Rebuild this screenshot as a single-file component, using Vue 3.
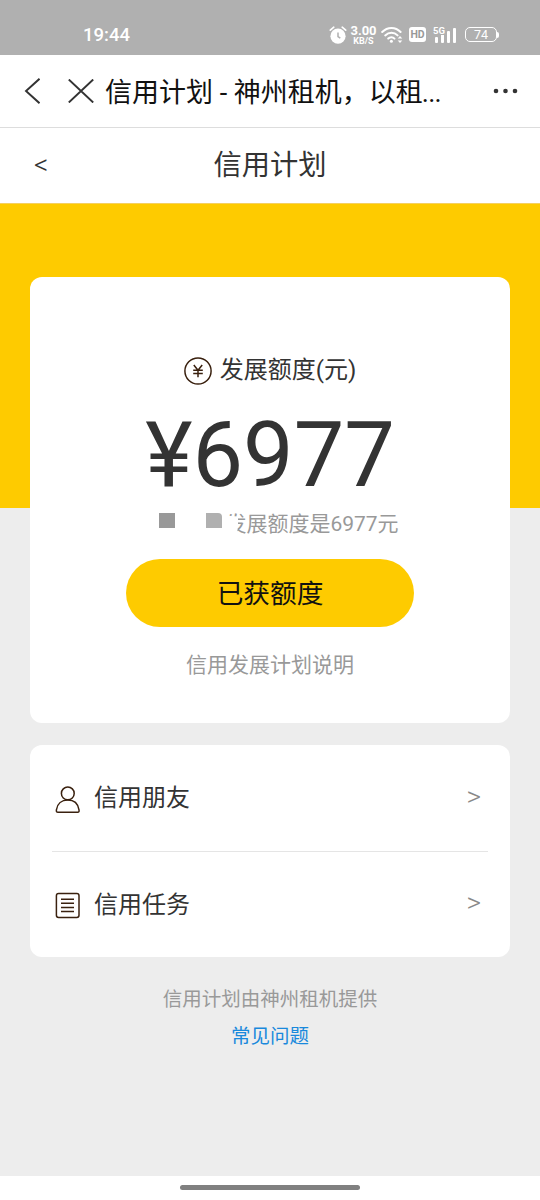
<script setup>
const menu = [
  { label: '信用朋友', icon: 'person' },
  { label: '信用任务', icon: 'list' },
]
</script>

<template>
  <div class="screen">
    <header class="status">
      <span class="clock">19:44</span>
      <div class="indicators">
        <svg class="alarm" width="18" height="20" viewBox="0 0 18 20">
          <circle cx="9" cy="11.2" r="7.6" fill="#fff" />
          <path d="M1.3 5.2 4.8 2.2M16.7 5.2 13.2 2.2" stroke="#fff" stroke-width="1.7" stroke-linecap="round" />
          <path d="M9 7.5V11.5L11.3 13.2" fill="none" stroke="#b0b0b0" stroke-width="1.5" />
        </svg>
        <div class="speed"><b>3.00</b><small>KB/S</small></div>
        <svg class="wifi" width="22" height="18" viewBox="0 0 22 18">
          <g fill="none" stroke="#fff" stroke-width="2" stroke-linecap="round">
            <path d="M1.2 6C6.5.5 14.5.5 19.6 6" />
            <path d="M4.2 9.4C8 5.8 13 5.8 16.6 9.4" />
            <path d="M7.2 12.6C9 10.9 11.8 10.9 13.5 12.6" />
          </g>
          <circle cx="10.4" cy="15.3" r="1.5" fill="#fff" />
          <path d="M16.7 12.6 19 10l2.3 2.6zM16.7 14.4 19 17l2.3-2.6z" fill="#fff" />
        </svg>
        <span class="hd">HD</span>
        <div class="signal">
          <span>5G</span>
          <svg width="24" height="18" viewBox="0 0 24 18" fill="#fff">
            <rect x="2" y="11" width="3" height="6" rx="1" />
            <rect x="8" y="8" width="3" height="9" rx="1" />
            <rect x="14" y="5" width="3" height="12" rx="1" />
            <rect x="20" y="2" width="3" height="15" rx="1" />
          </svg>
        </div>
        <div class="battery">74</div>
        <i class="battery-tip"></i>
      </div>
    </header>

    <div class="browser-bar">
      <svg class="back" width="16" height="26" viewBox="0 0 16 26"><path d="M15.5 .8 2 13 15.5 25.2" /></svg>
      <svg class="close" width="26" height="24" viewBox="0 0 26 24"><path d="M.8.5 25.2 23.5M25.2.5.8 23.5" /></svg>
      <span class="page-name">信用计划 - 神州租机，以租<span class="dots">...</span></span>
      <svg class="more" width="26" height="6" viewBox="0 0 26 6"><circle cx="3" cy="3" r="2.3" /><circle cx="12.5" cy="3" r="2.3" /><circle cx="22" cy="3" r="2.3" /></svg>
    </div>

    <nav class="nav">
      <span class="nav-back">&lt;</span>
      <h1>信用计划</h1>
    </nav>

    <main>
      <section class="card quota">
        <div class="quota-title">
          <svg width="28" height="28" viewBox="0 0 28 28" fill="none" stroke="#3a210f" stroke-width="1.5">
            <circle cx="14" cy="14" r="13.1" />
            <path d="M9.8 8 14 13.3 18.2 8M14 13.3V20.3M9.2 13.3H18.8M9.2 16.4H18.8" />
          </svg>
          <span>发展额度(元)</span>
        </div>
        <div class="amount">¥6977</div>
        <div class="summary">
          <span class="masked"><i class="block"></i><i class="block light"></i></span>
          <span class="cut">发</span><span>展额度是6977元</span>
        </div>
        <button class="action">已获额度</button>
        <a class="explain">信用发展计划说明</a>
      </section>

      <section class="card menu">
        <div v-for="item in menu" :key="item.label" class="row">
          <svg v-if="item.icon === 'person'" width="26" height="28" viewBox="0 0 26 28" fill="none" stroke="#3a210f" stroke-width="1.5">
            <circle cx="12.8" cy="7.4" r="6.4" />
            <path d="M3 26.3H22.5C24 26.3 24.3 25.3 24 23.8 23 17.5 18.8 14 12.8 14S2.3 17.5 1.4 23.8C1.2 25.3 1.5 26.3 3 26.3Z" />
          </svg>
          <svg v-else width="26" height="28" viewBox="0 0 26 28" fill="none" stroke="#3a210f" stroke-width="1.5">
            <rect x="1.4" y="1.5" width="22.6" height="24" rx="2.2" />
            <path d="M6 7.2H19M6 11.3H19M6 15.4H19M6 19.4H19" />
          </svg>
          <span class="label">{{ item.label }}</span>
          <span class="arrow">&gt;</span>
        </div>
      </section>

      <footer>
        <p>信用计划由神州租机提供</p>
        <a>常见问题</a>
      </footer>
    </main>

    <div class="gesture"><i></i></div>
  </div>
</template>

<style>
body { margin: 0; }
</style>

<style scoped>
.screen {
  width: 540px;
  height: 1200px;
  display: flex;
  flex-direction: column;
  overflow: hidden;
  background: #ededed;
  color: #333;
  font-family: Roboto, "Noto Sans CJK SC", sans-serif;
}
svg { display: block; flex: none; }
.status {
  height: 55px;
  flex: none;
  box-sizing: border-box;
  padding: 15px 41px 0 83px;
  display: flex;
  justify-content: space-between;
  background: #b0b0b0;
  color: #fff;
}
.clock { font-size: 18.5px; font-weight: 500; line-height: 41px; }
.indicators { display: flex; align-items: center; height: 39px; }
.speed { width: 27px; margin-left: 3px; text-align: center; }
.speed b, .speed small { display: block; font-weight: 700; white-space: nowrap; }
.speed b { font-size: 13px; line-height: 12px; }
.speed small { font-size: 9px; line-height: 8px; }
.wifi { margin-left: 4px; }
.hd {
  width: 17px;
  height: 15px;
  margin-left: 6px;
  border-radius: 3px;
  background: #fff;
  color: #999;
  font-size: 10.5px;
  font-weight: 700;
  line-height: 15px;
  text-align: center;
}
.signal { position: relative; margin-left: 7px; }
.signal span {
  position: absolute;
  left: 0;
  top: 0;
  font-size: 9.5px;
  font-weight: 700;
  line-height: 9px;
  background: #b0b0b0;
}
.battery {
  box-sizing: border-box;
  width: 32px;
  height: 15px;
  margin-left: 8px;
  border: 1.5px solid #fff;
  border-radius: 5px;
  font-size: 12.5px;
  line-height: 14px;
  text-align: center;
}
.battery-tip { width: 2px; height: 6px; background: #fff; border-radius: 0 2px 2px 0; }
.browser-bar {
  height: 73px;
  flex: none;
  box-sizing: border-box;
  padding: 0 21px 0 24px;
  display: flex;
  align-items: center;
  background: #fff;
  border-bottom: 1px solid #ddd;
}
.back, .close { fill: none; stroke: #333; stroke-width: 1.9; }
.close { margin-left: 28px; }
.page-name {
  flex: 1;
  margin-left: 11px;
  padding-top: 3px;
  font-size: 27px;
  line-height: 40px;
  color: #111;
  white-space: nowrap;
}
.dots { margin-left: -1px; letter-spacing: -.8px; }
.more { fill: #333; margin-left: 10px; }
.nav {
  height: 75px;
  flex: none;
  box-sizing: border-box;
  padding: 1px 34px 0;
  display: grid;
  grid-template-columns: 1fr auto 1fr;
  align-items: center;
  background: #fff;
}
.nav-back { margin-bottom: 3px; font-size: 28px; font-weight: 300; line-height: 36px; }
h1 { margin: 0; font-size: 28.3px; font-weight: 400; line-height: 40px; }
main {
  flex: 1;
  box-sizing: border-box;
  padding: 74px 30px 0;
  background: linear-gradient(#f5d060 1px, #fecb00 1px 305px, #ededed 305px);
}
.card { background: #fff; border-radius: 12px; overflow: hidden; }
.quota {
  height: 446px;
  box-sizing: border-box;
  padding-top: 74px;
  display: flex;
  flex-direction: column;
  align-items: center;
}
.quota-title {
  display: flex;
  align-items: center;
  gap: 8px;
  height: 38px;
  font-size: 24px;
  line-height: 36px;
}
.quota-title svg { margin-top: 1px; }
.quota-title span { white-space: nowrap; }
.amount { height: 118px; font-size: 90px; line-height: 134px; }
.summary {
  display: flex;
  align-items: center;
  height: 30px;
  font-size: 21px;
  line-height: 30px;
  color: #999;
  margin-left: 18px;
  margin-top: 2px;
}
.masked { display: flex; align-items: center; gap: 31px; width: 66px; height: 24px; margin-bottom: 7px; }
.block { width: 16px; height: 15px; background: #999; }
.block.light { background: #b0b0b0; border-top-right-radius: 4px; }
.cut { clip-path: polygon(0 0, 100% 0, 100% 100%, 50% 100%, 60% 60%, 60% 25%, 0 22%); }
.action {
  flex: none;
  width: 288px;
  height: 68px;
  margin: 20px 0 0;
  padding: 2px 0 0;
  border: 0;
  border-radius: 34px;
  background: #fecb00;
  color: #111;
  font: 400 26.7px/66px Roboto, "Noto Sans CJK SC", sans-serif;
}
.explain { margin-top: 23px; font-size: 21px; line-height: 30px; color: #999; }
.menu { height: 212px; margin-top: 22px; box-sizing: border-box; padding: 0 22px; }
.row {
  height: 106px;
  box-sizing: border-box;
  padding: 0 7px 0 3px;
  display: flex;
  align-items: center;
}
.row + .row { border-top: 1px solid #e5e5e5; }
.row svg { margin-top: 3px; }
.label { flex: 1; margin-left: 13px; font-size: 24px; line-height: 36px; }
.arrow { margin-bottom: 3px; font-size: 28px; font-weight: 300; line-height: 36px; color: #888; }
footer { padding-top: 27px; text-align: center; }
footer p, footer a { display: block; margin: 0; font-size: 19.5px; line-height: 32px; color: #999; }
footer a { margin-top: 5px; color: #1989dc; }
.gesture { height: 24px; flex: none; box-sizing: border-box; padding-bottom: 1px; background: #fff; display: flex; justify-content: center; align-items: center; }
.gesture i { width: 180px; height: 5px; border-radius: 3px; background: #808080; }
</style>
